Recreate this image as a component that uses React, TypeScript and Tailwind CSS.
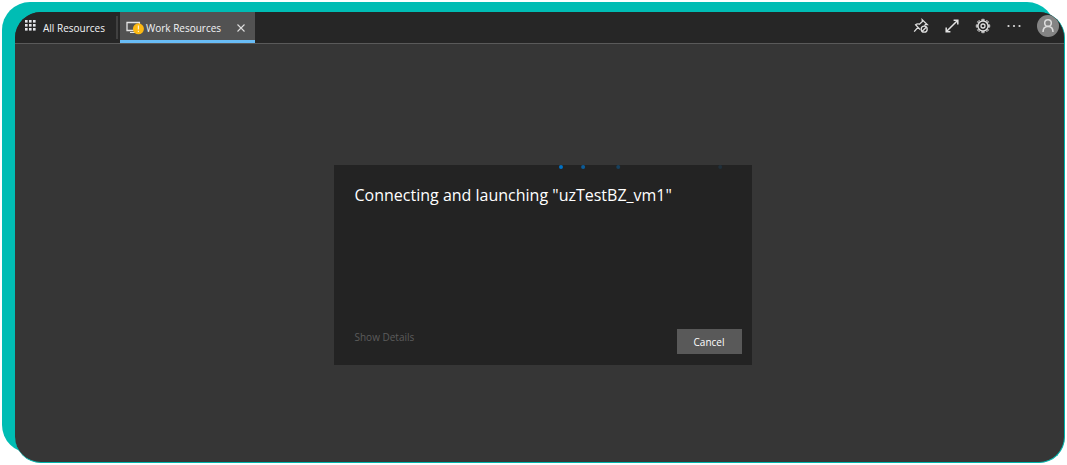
import React from "react";

function GridIcon() {
  return (
    <svg viewBox="0 0 12 12" className="size-3 fill-gray-200" aria-hidden="true">
      {[0, 4, 8].map((y) =>
        [0, 4, 8].map((x) => <rect key={`${x}-${y}`} x={x} y={y} width="2.6" height="2.6" />),
      )}
    </svg>
  );
}

function MonitorWarningIcon() {
  return (
    <svg viewBox="0 0 18 14" className="h-3.5 w-[18px] shrink-0" fill="none" aria-hidden="true">
      <path d="M1 1.5H13.4V9.5H1Z" stroke="#e5e5e5" strokeWidth="1.3" />
      <path d="M4 11.5H9" stroke="#e5e5e5" strokeWidth="1.2" />
      <circle cx="12.4" cy="7.8" r="5.5" fill="#fdb913" />
      <path d="M12.4 4.6V8.6M12.4 9.8V11" stroke="#fff3cf" strokeWidth="1.2" />
    </svg>
  );
}

function CloseIcon() {
  return (
    <svg viewBox="0 0 8 8" className="size-2" fill="none" stroke="#dedede" strokeWidth="1.1" aria-hidden="true">
      <path d="M.5.5 7.5 7.5M7.5.5.5 7.5" />
    </svg>
  );
}

function UnpinIcon() {
  return (
    <svg viewBox="0 0 16 16" className="size-4" fill="none" stroke="#dedede" strokeWidth="1.3" aria-hidden="true">
      <path d="M7.2 11.6 2.6 6.8C3.8 5.8 5.2 5.8 6.4 6.2L9.4 3.6 9.2 1.8 14.2 6.6 12.4 6.6 11.4 7.6M4.9 9.3 1.2 13.6" />
      <circle cx="11.2" cy="11.2" r="3" />
      <path d="M9.2 13.2 13.2 9.2" />
    </svg>
  );
}

function ExpandIcon() {
  return (
    <svg viewBox="0 0 16 16" className="size-4" fill="none" stroke="#e2e2e2" strokeWidth="1.5" aria-hidden="true">
      <path d="M2.2 13.8 13.8 2.2M9.6 2.2H13.8V6.4M2.2 9.6V13.8H6.4" />
    </svg>
  );
}

function GearIcon() {
  const teeth = [0, 45, 90, 135, 180, 225, 270, 315];
  return (
    <svg viewBox="0 0 16 16" className="size-4" fill="none" stroke="#dedede" aria-hidden="true">
      <circle cx="8" cy="8" r="5" strokeWidth="1.3" />
      <circle cx="8" cy="8" r="2" strokeWidth="1.3" />
      {teeth.map((angle) => (
        <path key={angle} d="M6.8 2.6H9.2V1.3H6.8Z" strokeWidth="0.9" transform={`rotate(${angle} 8 8)`} />
      ))}
    </svg>
  );
}

function MoreIcon() {
  return (
    <svg viewBox="0 0 16 16" className="size-4" fill="#dedede" aria-hidden="true">
      <circle cx="2.5" cy="8" r="1.1" />
      <circle cx="8" cy="8" r="1.1" />
      <circle cx="13.5" cy="8" r="1.1" />
    </svg>
  );
}

function PersonIcon() {
  return (
    <svg viewBox="0 0 16 16" className="size-4" fill="none" stroke="#dcdcdc" strokeWidth="1.5" aria-hidden="true">
      <circle cx="8" cy="5" r="3.3" />
      <path d="M3 14C3 10.5 5 8.5 8 8.5S13 10.5 13 14" />
    </svg>
  );
}

function ProgressDots() {
  return (
    <div role="progressbar" aria-label="Connecting" className="h-1">
      <svg className="h-1 w-full" aria-hidden="true">
        <circle cx="54.3%" cy="2" r="2" fill="#0072c6" />
        <circle cx="59.6%" cy="2" r="2" fill="#0c5c99" />
        <circle cx="68%" cy="2" r="2" fill="#17415f" />
        <circle cx="92.4%" cy="2" r="2" fill="#20303b" />
      </svg>
    </div>
  );
}

export default function App() {
  return (
    <div className="relative flex min-h-screen flex-col bg-white pt-3 pr-0.5 pb-0.5 pl-[15px] font-['Open_Sans','Noto_Sans',sans-serif] text-gray-100">
      <div aria-hidden="true" className="absolute top-0.5 right-3 bottom-3 left-0.5 rounded-[28px] bg-[#00bdb4]" />

      <div className="relative flex grow flex-col overflow-hidden rounded-[26px] border-r border-b border-[#00b5ad] bg-[#363636]">
        <header className="flex h-8 items-stretch justify-between border-b border-[#5a5a5a] bg-[#262626]">
          <nav className="flex items-stretch" aria-label="Open resources">
            <button type="button" className="flex items-center gap-1.5 pr-[11px] pl-2.5 text-[10px] leading-4">
              <span className="pb-1"><GridIcon /></span>
              All Resources
            </button>
            <div className="my-1 w-0.5 bg-[#404040]" />
            <div className="ml-0.5 flex w-[135px] items-center justify-between border-b-[3px] border-[#69bdf7] bg-[#525252] pt-[3px] pr-2.5 pl-1.5">
              <button type="button" className="flex items-center gap-0.5 text-[10px] leading-4 whitespace-nowrap">
                <MonitorWarningIcon />
                Work Resources
              </button>
              <button type="button" aria-label="Close Work Resources"><CloseIcon /></button>
            </div>
          </nav>
          <div className="flex items-center gap-[15px] pr-[5px] pb-1">
            <button type="button" aria-label="Unpin"><UnpinIcon /></button>
            <button type="button" aria-label="Full screen"><ExpandIcon /></button>
            <button type="button" aria-label="Settings"><GearIcon /></button>
            <button type="button" aria-label="More options"><MoreIcon /></button>
            <button type="button" aria-label="Account" className="flex size-[22px] items-center justify-center rounded-full bg-[#848484]">
              <PersonIcon />
            </button>
          </div>
        </header>

        <main className="flex grow items-center justify-center pt-6 pl-1.5">
          <section role="dialog" aria-labelledby="dialog-title" className="flex min-h-[200px] w-[418px] flex-col bg-[#232323]">
            <ProgressDots />
            <h1 id="dialog-title" className="px-[21px] pt-3.5 text-base leading-6 text-white">
              Connecting and launching "uzTestBZ_vm1"
            </h1>
            <div className="mt-auto flex items-start justify-between pr-2.5 pb-[11px] pl-[21px]">
              <button type="button" className="text-[10px] leading-4 text-[#5c5c5c]">Show Details</button>
              <button type="button" className="h-[25px] w-[65px] bg-[#595959] text-[10px] leading-4 text-white">Cancel</button>
            </div>
          </section>
        </main>
      </div>
    </div>
  );
}
